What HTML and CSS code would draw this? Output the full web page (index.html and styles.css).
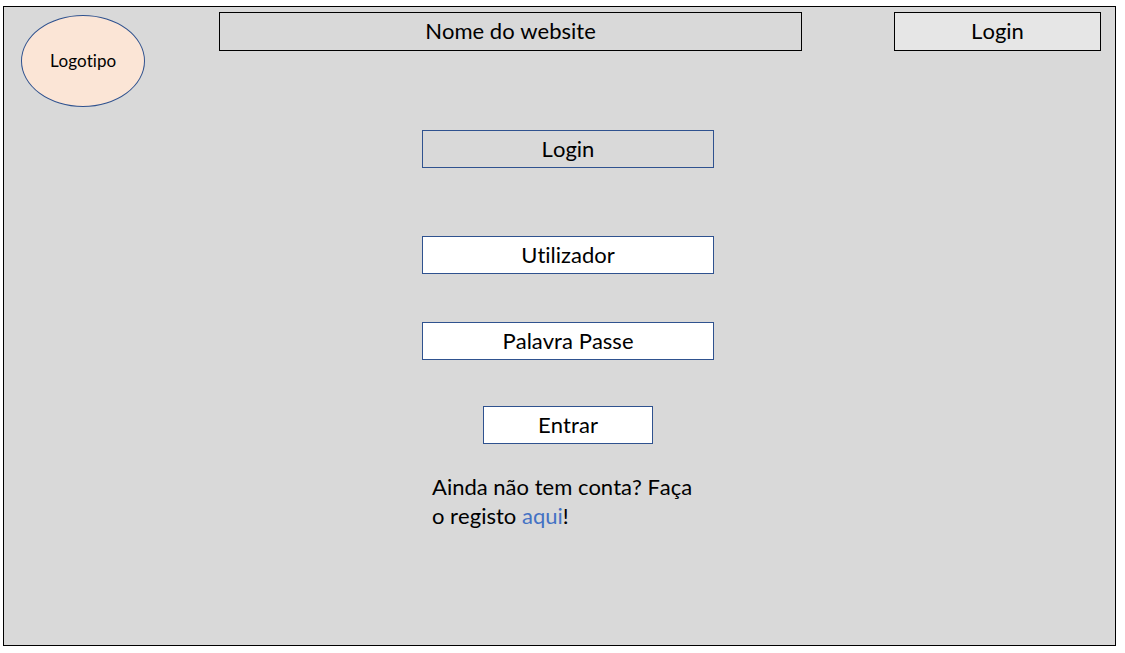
FILE: index.html
```html
<!DOCTYPE html>
<html lang="pt">
<head>
<meta charset="utf-8">
<meta name="viewport" content="width=device-width, initial-scale=1">
<title>Login</title>
<link rel="stylesheet" href="styles.css">
</head>
<body>
<div class="frame">
  <header class="header">
    <div class="logo">Logotipo</div>
    <div class="site-name">Nome do website</div>
    <button class="login-button" type="button">Login</button>
  </header>
  <main class="main">
    <form class="form">
      <h1 class="box title">Login</h1>
      <input class="box field" type="text" placeholder="Utilizador" aria-label="Utilizador">
      <input class="box field" type="password" placeholder="Palavra Passe" aria-label="Palavra Passe">
      <button class="box submit" type="button">Entrar</button>
      <p class="hint">Ainda não tem conta? Faça o registo <a class="link" href="#registo">aqui</a>!</p>
    </form>
  </main>
</div>
</body>
</html>
```

FILE: styles.css
```css
* {
  box-sizing: border-box;
}

body {
  margin: 0;
  min-height: 100vh;
  padding: 6px 9px 7px 3px;
  display: flex;
  background: #fff;
  color: #000;
  font-family: Lato, sans-serif;
  font-size: 22px;
  line-height: 29px;
  font-kerning: none;
  font-variant-ligatures: none;
}

button,
input {
  font: inherit;
  font-kerning: inherit;
  font-variant-ligatures: inherit;
  color: inherit;
}

.frame {
  flex: 1;
  border: 1px solid #000;
  background: #d9d9d9;
}

.header {
  display: flex;
  align-items: flex-start;
  padding: 5px 14px 0 17px;
}

.logo {
  display: flex;
  align-items: center;
  justify-content: center;
  width: 124px;
  height: 92px;
  margin-top: 3px;
  padding-bottom: 2px;
  border: 1px solid #2f528f;
  border-radius: 50%;
  background: #fbe5d6;
  font-size: 17px;
}

.site-name {
  flex: 1;
  height: 39px;
  margin: 0 92px 0 74px;
  padding: 3px 4px;
  border: 1px solid #000;
  text-align: center;
}

.login-button {
  width: 207px;
  height: 39px;
  padding: 0 0 2px;
  border: 1px solid #000;
  background: #e6e6e6;
}

.main {
  display: flex;
  justify-content: center;
  padding: 23px 0 24px 17px;
}

.form {
  display: flex;
  flex-direction: column;
  align-items: center;
  width: 292px;
}

.box {
  width: 100%;
  height: 38px;
  margin: 0 0 48px;
  padding: 0 0 2px;
  border: 1px solid #2f528f;
  border-radius: 0;
  background: #fff;
  text-align: center;
}

.title {
  margin-bottom: 68px;
  padding: 3px 4px;
  background: transparent;
  font-size: 22px;
  font-weight: 400;
}

.field::placeholder {
  color: #000;
  opacity: 1;
}

.field[type="password"] {
  margin-bottom: 46px;
}

.submit {
  width: 170px;
  margin-bottom: 28px;
}

.hint {
  width: 100%;
  margin: 0;
  padding: 0 10px;
}

.link {
  color: #4472c4;
  text-decoration: none;
}
```
